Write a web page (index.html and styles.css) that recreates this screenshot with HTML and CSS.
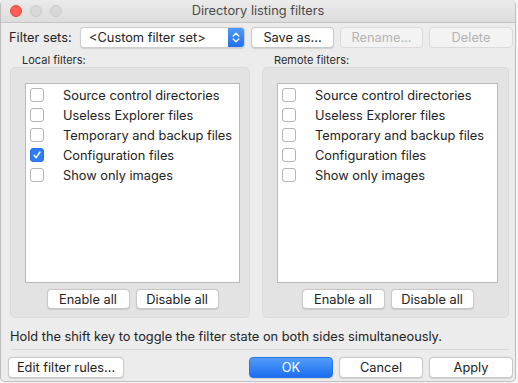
FILE: index.html
```html
<!DOCTYPE html>
<html>
<head>
<meta charset="utf-8">
<link rel="stylesheet" href="styles.css">
</head>
<body>
<div class="window">
  <div class="titlebar">
    <div class="lights">
      <span class="light red"></span>
      <span class="light"></span>
      <span class="light"></span>
    </div>
    <div class="title">Directory listing filters</div>
  </div>
  <div class="content">
    <div class="setsrow">
      <span class="setslabel">Filter sets:</span>
      <div class="select">
        <span class="selecttext">&lt;Custom filter set&gt;</span>
        <span class="stepper">
          <svg width="8" height="13" viewBox="0 0 8 13"><path d="M1.2 5 L4 2.2 L6.8 5 M1.2 8 L4 10.8 L6.8 8" fill="none" stroke="#fff" stroke-width="1.3" stroke-linecap="round" stroke-linejoin="round"/></svg>
        </span>
      </div>
      <button class="btn top">Save as...</button>
      <button class="btn top disabled">Rename...</button>
      <button class="btn top disabled wide">Delete</button>
    </div>
    <div class="panes">
      <div class="pane">
        <div class="panelabel">Local filters:</div>
        <div class="group">
          <div class="list">
            <div class="item"><span class="cb"></span><span>Source control directories</span></div>
            <div class="item"><span class="cb"></span><span>Useless Explorer files</span></div>
            <div class="item"><span class="cb"></span><span>Temporary and backup files</span></div>
            <div class="item"><span class="cb checked"><svg width="10" height="10" viewBox="0 0 10 10"><path d="M2.2 5.4 L4.2 7.7 L8 2" fill="none" stroke="#fff" stroke-width="1.5" stroke-linecap="round" stroke-linejoin="round"/></svg></span><span>Configuration files</span></div>
            <div class="item"><span class="cb"></span><span>Show only images</span></div>
          </div>
          <div class="groupbtns">
            <button class="btn small">Enable all</button>
            <button class="btn small">Disable all</button>
          </div>
        </div>
      </div>
      <div class="pane remote">
        <div class="panelabel">Remote filters:</div>
        <div class="group">
          <div class="list">
            <div class="item"><span class="cb"></span><span>Source control directories</span></div>
            <div class="item"><span class="cb"></span><span>Useless Explorer files</span></div>
            <div class="item"><span class="cb"></span><span>Temporary and backup files</span></div>
            <div class="item"><span class="cb"></span><span>Configuration files</span></div>
            <div class="item"><span class="cb"></span><span>Show only images</span></div>
          </div>
          <div class="groupbtns">
            <button class="btn small">Enable all</button>
            <button class="btn small">Disable all</button>
          </div>
        </div>
      </div>
    </div>
    <div class="hint">Hold the shift key to toggle the filter state on both sides simultaneously.</div>
    <div class="sep"></div>
    <div class="bottomrow">
      <button class="btn editrules">Edit filter rules...</button>
      <div class="spacer"></div>
      <button class="btn primary">OK</button>
      <button class="btn">Cancel</button>
      <button class="btn">Apply</button>
    </div>
  </div>
</div>
</body>
</html>
```
FILE: styles.css
```css
* { box-sizing: border-box; }
html, body { margin: 0; padding: 0; }
body {
  width: 518px;
  height: 383px;
  background: #f6f6f6;
  font-family: Inter, "Liberation Sans", Arial, sans-serif;
  font-size: 12.8px;
  color: #222;
  overflow: hidden;
}
.window {
  width: 516px;
  height: 382px;
  background: #ececec;
  border: 1px solid #bdbdbd;
  border-top: none;
  border-radius: 5px;
  overflow: hidden;
  display: flex;
  flex-direction: column;
}
.titlebar {
  height: 23px;
  flex: none;
  background: linear-gradient(#ebebeb, #dcdcdc);
  border-bottom: 1px solid #c4c4c4;
  display: flex;
  align-items: center;
  position: relative;
}
.lights {
  display: flex;
  gap: 8px;
  padding-left: 9px;
}
.light {
  width: 12px;
  height: 12px;
  border-radius: 50%;
  background: #d8d8d8;
  border: 1px solid #cacaca;
}
.light.red { background: #fd5f57; border-color: #e2463f; }
.title {
  position: absolute;
  left: 0; right: 0; top: 0;
  line-height: 22px;
  text-align: center;
  color: #4a4a4a;
  font-size: 12.8px;
}
.content {
  flex: 1;
  display: flex;
  flex-direction: column;
  padding: 4px 0 0 7px;
}
.setsrow {
  display: flex;
  align-items: center;
  height: 21px;
}
.setslabel { width: 72px; padding-left: 1px; }
.select {
  width: 165px;
  height: 21px;
  background: #fff;
  border: 1px solid #cdcdcd;
  border-radius: 4px;
  display: flex;
  align-items: center;
  overflow: hidden;
  box-shadow: 0 0.5px 1px rgba(0,0,0,0.12);
}
.selecttext { flex: 1; padding-left: 8px; }
.stepper {
  width: 16px;
  height: 21px;
  background: linear-gradient(#519cf8, #1d6ff0);
  display: flex;
  align-items: center;
  justify-content: center;
}
.btn {
  font-family: inherit;
  font-size: 12.8px;
  color: #222;
  background: #fff;
  border: 1px solid #c8c8c8;
  border-radius: 4px;
  height: 21px;
  padding: 0;
  box-shadow: 0 0.5px 1px rgba(0,0,0,0.12);
}
.btn.top { width: 83px; margin-left: 6px; }
.btn.top.wide { width: 84px; }
.btn.disabled {
  color: #b3b3b3;
  background: #f3f3f3;
  border-color: #dadada;
  box-shadow: none;
}
.panes {
  display: flex;
  gap: 12px;
  margin-top: 6px;
  margin-left: 2px;
}
.pane { width: 240px; display: flex; flex-direction: column; }
.pane.remote { width: 247px; }
.panelabel {
  font-size: 11px;
  color: #2a2a2a;
  padding-left: 12px;
  height: 13px;
  line-height: 13px;
}
.group {
  height: 251px;
  background: #e3e3e3;
  border: 1px solid #dadada;
  border-radius: 5px;
  padding: 15px 9px 0 14px;
  display: flex;
  flex-direction: column;
}
.remote .group { padding-right: 10px; }
.list {
  height: 200px;
  background: #fff;
  border: 1px solid #b9b9b9;
  padding-top: 1px;
}
.item {
  display: flex;
  align-items: center;
  height: 20px;
}
.cb {
  width: 14px;
  height: 14px;
  margin-left: 4px;
  margin-right: 19px;
  border: 1px solid #b4b4b4;
  border-radius: 3px;
  background: #fff;
  display: flex;
  align-items: center;
  justify-content: center;
  flex: none;
}
.cb.checked {
  background: #2f7df6;
  border-color: #2470e8;
}
.groupbtns {
  display: flex;
  justify-content: center;
  gap: 6px;
  margin-top: 6px;
}
.btn.small { width: 83px; height: 20px; }
.hint {
  margin-top: 10px;
  margin-left: 2px;
  height: 18px;
  line-height: 18px;
}
.sep {
  height: 1px;
  background: #d7d7d7;
  margin: 3px 0 0 3px;
  width: 498px;
}
.bottomrow {
  display: flex;
  align-items: center;
  margin-top: 7px;
  width: 505px;
}
.bottomrow .btn { width: 84px; height: 21px; margin-left: 6px; }
.bottomrow .btn.editrules { width: 116px; margin-left: 0; }
.spacer { flex: 1; }
.btn.primary {
  background: linear-gradient(#529df9, #1b6ef0);
  border-color: #2b74e8;
  color: #fff;
}
```
